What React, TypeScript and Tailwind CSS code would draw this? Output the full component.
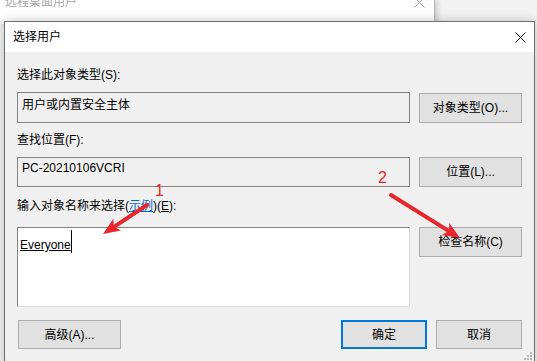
import React from "react";

const font = { fontFamily: '"Liberation Sans", "Noto Sans CJK SC", sans-serif' };

function Button({ label, className = "" }: { label: string; className?: string }) {
  return (
    <div
      className={`flex items-center justify-center bg-[#e1e1e1] border border-[#adadad] text-[12px] text-black ${className}`}
    >
      {label}
    </div>
  );
}

function Arrow({ x1, y1, x2, y2 }: { x1: number; y1: number; x2: number; y2: number }) {
  const dx = x2 - x1;
  const dy = y2 - y1;
  const len = Math.hypot(dx, dy);
  const ux = dx / len;
  const uy = dy / len;
  const L = 17;
  const W = 7;
  const bx = x2 - ux * L;
  const by = y2 - uy * L;
  const nx = -uy;
  const ny = ux;
  const pts = `${x2},${y2} ${bx + nx * W},${by + ny * W} ${bx + ux * 4},${by + uy * 4} ${bx - nx * W},${by - ny * W}`;
  return (
    <g>
      <line x1={x1} y1={y1} x2={bx + ux * 3} y2={by + uy * 3} stroke="#e8262b" strokeWidth="4" strokeLinecap="round" />
      <polygon points={pts} fill="#e8262b" />
    </g>
  );
}

export default function App() {
  return (
    <div className="relative w-[537px] h-[361px] overflow-hidden bg-[#f2f2f2]" style={font}>
      {/* Window behind */}
      <div className="absolute left-0 top-0 w-[435px] h-[24px] bg-white border-r border-[#b4b4b4] shadow-[2px_0_6px_rgba(0,0,0,0.18)]">
        <div className="flex items-center justify-between -mt-[7px] pl-[5px] pr-[9px] leading-[18px]">
          <span className="text-[12px] text-[#a6a6a6]">远程桌面用户</span>
          <svg width="11" height="11" viewBox="0 0 11 11">
            <path d="M0.5 0.5 L10.5 10.5 M10.5 0.5 L0.5 10.5" stroke="#9a9a9a" strokeWidth="1" />
          </svg>
        </div>
      </div>

      {/* Dialog */}
      <div className="absolute left-[4px] top-[21px] w-[531px] h-[345px] border border-[#6f6f6f] bg-[#f0f0f0] shadow-[0_0_10px_rgba(0,0,0,0.22)]">
        {/* Title bar */}
        <div className="flex items-center justify-between h-[30px] bg-white pl-[8px] pr-[8px]">
          <span className="text-[12px] text-black leading-[18px]">选择用户</span>
          <svg width="11" height="11" viewBox="0 0 11 11">
            <path d="M0.5 0.5 L10.5 10.5 M10.5 0.5 L0.5 10.5" stroke="#111" strokeWidth="1" />
          </svg>
        </div>

        {/* Body */}
        <div className="flex flex-col pl-[12px] text-[12px] text-black">
          <div className="pt-[14px] leading-[18px]">选择此对象类型(S):</div>
          <div className="mt-[8px] flex items-start gap-[9px]">
            <div className="w-[393px] h-[31px] border border-[#848484] pl-[4px] pt-[3px] leading-[18px]">
              用户或内置安全主体
            </div>
            <Button label="对象类型(O)..." className="w-[103px] h-[30px] mt-px" />
          </div>

          <div className="mt-[8px] leading-[18px]">查找位置(F):</div>
          <div className="mt-[8px] flex items-start gap-[9px]">
            <div className="w-[393px] h-[30px] border border-[#848484] pl-[4px] pt-[1px] leading-[18px]">
              PC-20210106VCRI
            </div>
            <Button label="位置(L)..." className="w-[103px] h-[30px]" />
          </div>

          <div className="mt-[10px] leading-[18px]">
            输入对象名称来选择(<span className="text-[#0066cc] underline">示例</span>)(<span className="underline">E</span>):
          </div>
          <div className="mt-[12px] flex items-start gap-[9px]">
            <div className="w-[393px] h-[80px] bg-white border border-t-[#828282] border-l-[#828282] border-r-[#dcdcdc] border-b-[#dcdcdc] pl-[2px] pt-[8px] leading-[18px]">
              <span className="underline">Everyone</span>
              <span className="inline-block align-top w-px h-[23px] -mt-[6px] bg-black" />
            </div>
            <Button label="检查名称(C)" className="w-[103px] h-[30px]" />
          </div>

          <div className="mt-[13px] flex items-center w-[505px]">
            <Button label="高级(A)..." className="w-[103px] h-[29px] ml-px" />
            <div className="ml-auto flex gap-[9px]">
              <div className="flex items-center justify-center w-[86px] h-[29px] bg-[#e1e1e1] border-2 border-[#0078d7]">
                确定
              </div>
              <Button label="取消" className="w-[86px] h-[29px]" />
            </div>
          </div>
        </div>
      </div>

      {/* Size grip */}
      <svg className="absolute left-[522px] top-[349px]" width="12" height="12" viewBox="0 0 12 12">
        <rect x="8" y="3" width="2" height="2" fill="#b8b8b8" />
        <rect x="5" y="6" width="2" height="2" fill="#b8b8b8" />
        <rect x="8" y="6" width="2" height="2" fill="#b8b8b8" />
        <rect x="2" y="9" width="2" height="2" fill="#b8b8b8" />
        <rect x="5" y="9" width="2" height="2" fill="#b8b8b8" />
        <rect x="8" y="9" width="2" height="2" fill="#b8b8b8" />
      </svg>

      {/* Annotations */}
      <svg className="absolute left-0 top-0 pointer-events-none" width="537" height="361">
        <Arrow x1={147} y1={205} x2={103} y2={234} />
        <Arrow x1={391} y1={195} x2={460} y2={238} />
      </svg>
      <span className="absolute left-[155px] top-[183px] text-[16px] leading-[16px] text-[#e8262b]">1</span>
      <span className="absolute left-[378px] top-[170px] text-[16px] leading-[16px] text-[#e8262b]">2</span>
    </div>
  );
}
